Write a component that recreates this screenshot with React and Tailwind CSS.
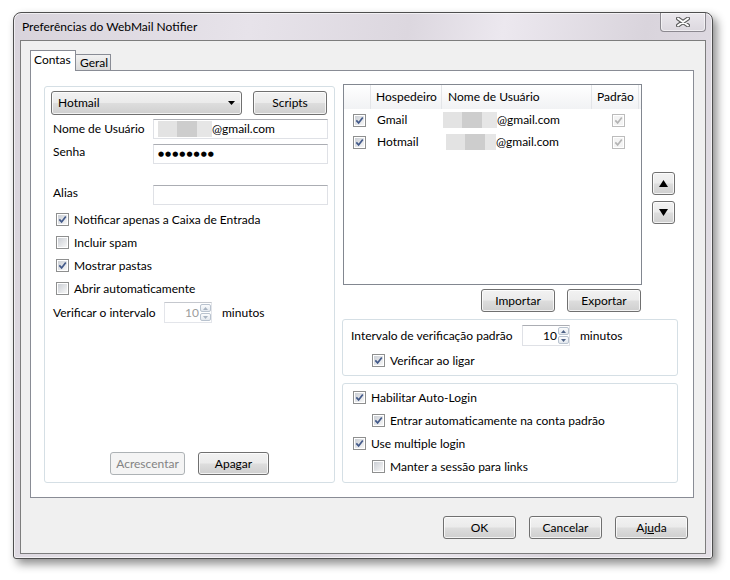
import React from 'react'

const btn =
  'flex items-center justify-center rounded-[3px] border border-[#707070] bg-[linear-gradient(#f2f2f2_0%,#ebebeb_48%,#dddddd_52%,#cfcfcf_100%)] shadow-[inset_0_0_0_1px_rgba(255,255,255,0.75)] text-black'
const combo =
  'flex items-center justify-between rounded-[3px] border border-[#707070] bg-[linear-gradient(#f2f2f2_0%,#ebebeb_48%,#dddddd_52%,#cfcfcf_100%)] shadow-[inset_0_0_0_1px_rgba(255,255,255,0.75)] text-black'
const btnOff =
  'flex items-center justify-center rounded-[3px] border border-[#adb2b5] bg-[#f4f4f4] text-[#838383]'
const field = 'flex h-[20px] w-[175px] items-center border border-[#dfe1e6] border-t-[#abadb3] bg-white px-[3px]'
const group = 'rounded-[3px] border border-[#d5dfe5] shadow-[inset_0_0_0_1px_#ffffff]'

function Check({ on, dim }) {
  return (
    <span
      className={
        dim
          ? 'flex h-[13px] w-[13px] shrink-0 border border-[#bcbcbc] bg-white p-px'
          : 'flex h-[13px] w-[13px] shrink-0 border border-[#8e8f8f] bg-white p-px'
      }
    >
      <span
        className={
          dim
            ? 'flex h-full w-full items-center justify-center bg-[#f4f4f4]'
            : 'flex h-full w-full items-center justify-center bg-linear-to-br from-[#cbcfd5] to-[#f7f7f7]'
        }
      >
        {on && (
          <svg width="9" height="9" viewBox="0 0 9 9">
            <path
              d="M1.3 4.4 L3.6 6.9 L7.8 1.4"
              fill="none"
              stroke={dim ? '#b4b4b4' : '#435a8a'}
              strokeWidth="1.7"
            />
          </svg>
        )}
      </span>
    </span>
  )
}

function CheckRow({ on, label, indent }) {
  return (
    <div className={indent ? 'flex h-[23px] items-center gap-[5px] pl-[29px]' : 'flex h-[23px] items-center gap-[5px] pl-[10px]'}>
      <Check on={on} />
      <span>{label}</span>
    </div>
  )
}

function Spin({ dim }) {
  return (
    <div
      className={
        dim
          ? 'flex h-[21px] w-[48px] border border-[#e3e5ea] border-t-[#c5c8ce] bg-white'
          : 'flex h-[21px] w-[48px] border border-[#dfe1e6] border-t-[#abadb3] bg-white'
      }
    >
      <span className={dim ? 'flex flex-1 items-center justify-end pr-[1px] text-[#9c9c9c]' : 'flex flex-1 items-center justify-end pr-[1px]'}>
        10
      </span>
      <div className="flex w-[11px] flex-col gap-px py-px">
        <span className="flex flex-1 items-center justify-center rounded-[2px] border border-[#b9c3cf] bg-linear-to-b from-[#fbfcfd] to-[#e3e8ee]">
          <svg width="5" height="3" viewBox="0 0 5 3"><path d="M0 3 L2.5 0 L5 3Z" fill={dim ? '#a9b4c2' : '#4d6185'} /></svg>
        </span>
        <span className="flex flex-1 items-center justify-center rounded-[2px] border border-[#b9c3cf] bg-linear-to-b from-[#fbfcfd] to-[#e3e8ee]">
          <svg width="5" height="3" viewBox="0 0 5 3"><path d="M0 0 L2.5 3 L5 0Z" fill={dim ? '#a9b4c2' : '#4d6185'} /></svg>
        </span>
      </div>
    </div>
  )
}

function Blur({ shift }) {
  return (
    <span className={shift ? 'ml-[4px] flex h-[16px] w-[50px]' : 'ml-px flex h-[16px] w-[54px]'}>
      <span className="w-[19px] bg-[#e3e3e3]" />
      <span className="w-[20px] bg-[#cdcdcd]" />
      <span className="flex-1 bg-[#e6e6e6]" />
    </span>
  )
}

function AccountRow({ host, shift }) {
  return (
    <div className="flex h-[22px] items-center">
      <div className="flex w-[27px] pl-[9px]">
        <Check on />
      </div>
      <div className="w-[71px] pl-[6px]">{host}</div>
      <div className="flex w-[150px] items-center">
        <Blur shift={shift} />
        <span>@gmail.com</span>
      </div>
      <div className="flex w-[47px] pl-[20px]">
        <Check on dim />
      </div>
    </div>
  )
}

export default function App() {
  return (
    <div className="h-[580px] w-[730px] overflow-hidden bg-white pl-[13px] pt-[12px] font-['Lato','Noto_Sans',sans-serif] text-[12px] leading-[16px] text-black">
      <div className="flex h-[547px] w-[700px] flex-col rounded-t-[8px] rounded-b-[3px] border border-[#4e4e4e] bg-[linear-gradient(100deg,#d8d3db_0%,#e7e3ea_30%,#dcd7df_50%,#ece8ef_62%,#d9d4dc_80%,#e4e0e7_100%)] px-[6px] pb-[4px] shadow-[inset_0_0_0_1px_rgba(255,255,255,0.6),4px_5px_10px_rgba(0,0,0,0.45)]">
        <div className="flex h-[27px] items-start justify-between">
          <span className="pl-[2px] pt-[6px]">Preferências do WebMail Notifier</span>
          <span className="flex h-[19px] w-[46px] items-center justify-center rounded-b-[4px] border border-t-0 border-[#8c8990] bg-linear-to-b from-[#ebe8ed] to-[#dcd8df] shadow-[inset_0_0_0_1px_rgba(255,255,255,0.55)]">
            <svg width="14" height="10" viewBox="0 0 14 10">
              <path d="M2 1.5 L12 8.5 M12 1.5 L2 8.5" stroke="#5a5a5a" strokeWidth="4" strokeLinecap="round" />
              <path d="M2 1.5 L12 8.5 M12 1.5 L2 8.5" stroke="#ffffff" strokeWidth="2" strokeLinecap="round" />
            </svg>
          </span>
        </div>

        <div className="flex flex-1 flex-col border border-[#7d7d7d] bg-[#f0f0f0] pl-[9px] pr-[17px] pt-[9px]">
          <div className="flex h-[21px] items-end">
            <div className="relative z-10 flex h-[21px] w-[46px] items-start border border-b-0 border-[#898c95] bg-white pl-[3px] pt-[1px]">
              Contas
            </div>
            <div className="flex h-[17px] w-[35px] items-start border border-b-0 border-l-0 border-[#898c95] bg-linear-to-b from-[#f2f2f2] to-[#d8d8d8] pl-[4px]">
              Geral
            </div>
          </div>

          <div className="-mt-px flex h-[428px] w-[664px] gap-[7px] border border-[#898c95] bg-white pb-[14px] pl-[13px] pt-[13px]">
            {/* left: account editor */}
            <div className={`${group} mt-[2px] flex w-[291px] flex-col px-[6px] pb-[7px] pt-[4px]`}>
              <div className="flex">
                <div className={`${combo} h-[24px] w-[191px] px-[6px]`}>
                  <span>Hotmail</span>
                  <svg width="7" height="4" viewBox="0 0 7 4"><path d="M0 0 L7 0 L3.5 4Z" fill="#000" /></svg>
                </div>
                <div className={`${btn} ml-[11px] h-[24px] w-[74px]`}>Scripts</div>
              </div>

              <div className="mt-[4px] flex items-center">
                <span className="w-[102px] pl-[2px]">Nome de Usuário</span>
                <div className={field}>
                  <Blur />
                  <span>@gmail.com</span>
                </div>
              </div>
              <div className="mt-[5px] flex items-start">
                <span className="w-[102px] pl-[2px]">Senha</span>
                <div className={field}>
                  <span className="pl-px font-['DejaVu_Sans',sans-serif] text-[7px] tracking-[1px]">●●●●●●●●</span>
                </div>
              </div>
              <div className="mt-[21px] flex items-start">
                <span className="w-[102px] pl-[2px]">Alias</span>
                <div className={field} />
              </div>

              <div className="mt-[3px] flex flex-col">
                <div className="flex h-[23px] items-center gap-[5px] pl-[5px]">
                  <Check on />
                  <span>Notificar apenas a Caixa de Entrada</span>
                </div>
                <div className="flex h-[23px] items-center gap-[5px] pl-[5px]">
                  <Check />
                  <span>Incluir spam</span>
                </div>
                <div className="flex h-[23px] items-center gap-[5px] pl-[5px]">
                  <Check on />
                  <span>Mostrar pastas</span>
                </div>
                <div className="flex h-[23px] items-center gap-[5px] pl-[5px]">
                  <Check />
                  <span>Abrir automaticamente</span>
                </div>
              </div>

              <div className="mt-[2px] flex items-center">
                <span className="w-[113px] pl-[2px]">Verificar o intervalo</span>
                <Spin dim />
                <span className="ml-[10px]">minutos</span>
              </div>

              <div className="mt-auto flex pl-[59px]">
                <div className={`${btnOff} h-[23px] w-[75px]`}>Acrescentar</div>
                <div className={`${btn} ml-[13px] h-[23px] w-[71px]`}>Apagar</div>
              </div>
            </div>

            {/* right: account list and global options */}
            <div className="flex w-[336px] flex-col">
              <div className="flex">
                <div className="ml-px flex h-[201px] w-[299px] flex-col border border-[#828790] bg-white">
                  <div className="flex h-[24px] bg-linear-to-b from-white to-[#f1f2f4]">
                    <div className="w-[27px] border-r border-[#e3e5e8]" />
                    <div className="flex w-[71px] items-center border-r border-[#e3e5e8] pl-[5px]">Hospedeiro</div>
                    <div className="flex w-[150px] items-center border-r border-[#e3e5e8] pl-[6px]">Nome de Usuário</div>
                    <div className="flex w-[47px] items-center border-r border-[#e3e5e8] pl-[5px]">Padrão</div>
                  </div>
                  <AccountRow host="Gmail" />
                  <AccountRow host="Hotmail" shift />
                </div>
                <div className="ml-[10px] mt-[88px] flex flex-col gap-[6px]">
                  <div className={`${btn} h-[23px] w-[23px]`}>
                    <svg width="9" height="7" viewBox="0 0 9 7"><path d="M0 7 L4.5 0 L9 7Z" fill="#000" /></svg>
                  </div>
                  <div className={`${btn} h-[23px] w-[23px]`}>
                    <svg width="9" height="7" viewBox="0 0 9 7"><path d="M0 0 L4.5 7 L9 0Z" fill="#000" /></svg>
                  </div>
                </div>
              </div>

              <div className="mt-[4px] flex justify-end gap-[12px] pr-[37px]">
                <div className={`${btn} h-[23px] w-[74px]`}>Importar</div>
                <div className={`${btn} h-[23px] w-[74px]`}>Exportar</div>
              </div>

              <div className={`${group} mt-[7px] flex h-[57px] flex-col px-[8px] pt-[5px]`}>
                <div className="flex h-[21px] items-center">
                  <span className="w-[171px]">Intervalo de verificação padrão</span>
                  <Spin />
                  <span className="ml-[10px]">minutos</span>
                </div>
                <div className="mt-[3px] flex h-[23px] items-center gap-[5px] pl-[21px]">
                  <Check on />
                  <span>Verificar ao ligar</span>
                </div>
              </div>

              <div className={`${group} mt-[7px] flex flex-1 flex-col pt-[2px]`}>
                <CheckRow on label="Habilitar Auto-Login" />
                <CheckRow on indent label="Entrar automaticamente na conta padrão" />
                <CheckRow on label="Use multiple login" />
                <CheckRow indent label="Manter a sessão para links" />
              </div>
            </div>
          </div>

          <div className="mt-[18px] flex justify-end gap-[13px]">
            <div className={`${btn} h-[23px] w-[73px]`}>OK</div>
            <div className={`${btn} h-[23px] w-[73px]`}>Cancelar</div>
            <div className={`${btn} h-[23px] w-[73px]`}>
              <span>
                Aj<span className="underline">u</span>da
              </span>
            </div>
          </div>
        </div>
      </div>
    </div>
  )
}
